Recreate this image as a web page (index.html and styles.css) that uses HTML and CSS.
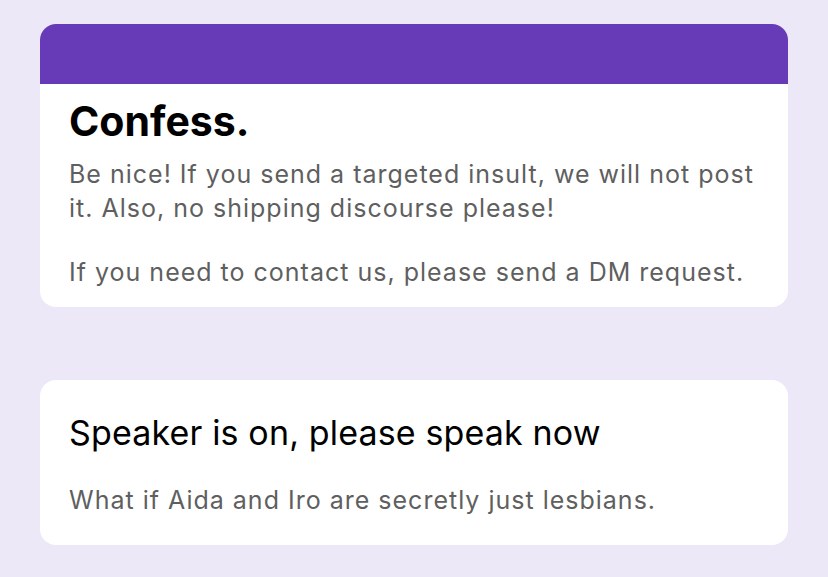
FILE: index.html
```html
<!DOCTYPE html>
<html>
<head>
<meta charset="utf-8">
<link rel="stylesheet" href="styles.css">
</head>
<body>
<main class="page">
  <section class="card intro">
    <div class="band"></div>
    <div class="intro-body">
      <h1 class="title">Confess.</h1>
      <p class="desc">Be nice! If you send a targeted insult, we will not post it. Also, no shipping discourse please!</p>
      <p class="desc">If you need to contact us, please send a DM request.</p>
    </div>
  </section>
  <section class="card question">
    <h2 class="q-title">Speaker is on, please speak now</h2>
    <p class="answer">What if Aida and Iro are secretly just lesbians.</p>
  </section>
</main>
</body>
</html>
```
FILE: styles.css
```css
html, body {
  margin: 0;
  padding: 0;
  background: #ede8f7;
}
.page {
  padding: 24px 40px 32px 40px;
  display: flex;
  flex-direction: column;
  gap: 73px;
}
.card {
  background: #ffffff;
  border-radius: 16px;
  overflow: hidden;
}
.band {
  height: 60px;
  background: #673ab7;
}
.intro-body {
  padding: 11px 29px 18px 29px;
}
.title {
  margin: 0;
  font-family: Inter, "Liberation Sans", sans-serif;
  font-weight: 700;
  font-size: 41px;
  line-height: 52px;
  color: #000;
}
.desc {
  margin: 10px 0 0 0;
  font-family: Inter, "Liberation Sans", sans-serif;
  font-size: 25px;
  line-height: 34px;
  letter-spacing: 1px;
  color: #5f5f5f;
}
.desc + .desc {
  margin-top: 30px;
}
.question {
  padding: 31px 29px 28px 29px;
}
.q-title {
  margin: 0;
  font-family: Inter, "Liberation Sans", sans-serif;
  font-weight: 400;
  font-size: 34px;
  line-height: 44px;
  letter-spacing: 0.15px;
  color: #000;
}
.answer {
  margin: 28px 0 0 0;
  font-family: Inter, "Liberation Sans", sans-serif;
  font-size: 25px;
  line-height: 34px;
  letter-spacing: 1px;
  color: #5f5f5f;
}
```
